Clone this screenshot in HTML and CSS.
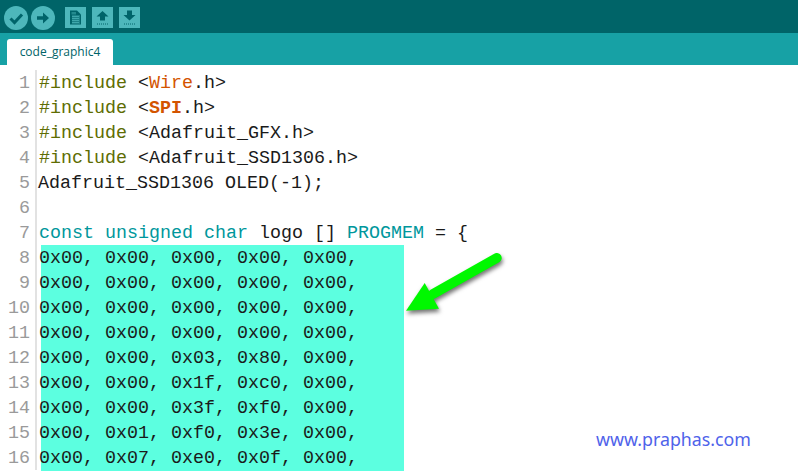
FILE: index.html
```html
<!DOCTYPE html>
<html lang="en">
<head>
<meta charset="utf-8">
<title>code_graphic4</title>
<link rel="stylesheet" href="styles.css">
</head>
<body>
<div class="app">
  <header class="toolbar">
    <button class="tool round" aria-label="Verify"><svg viewBox="0 0 24 24" width="24" height="24"><path d="M6.500 12.500l4 4 7.500-8" fill="none" stroke="#00646a" stroke-width="3"/></svg></button>
    <button class="tool round" aria-label="Upload"><svg viewBox="0 0 24 24" width="24" height="24"><path d="M6 10.200h6V6.500l6 5.500-6 5.500v-3.700H6z" fill="#00646a"/></svg></button>
    <button class="tool square first" aria-label="New"><svg viewBox="0 0 21 21" width="21" height="21"><path d="M5 3.500h7l4 4v10H5z" fill="#00646a"/><path d="M7 9.500h7M7 11.500h7M7 13.500h7M7 15.500h7M8 8v9M10 8v9M12 8v9M14 8v9" stroke="#4db7bb" stroke-width=".7" fill="none"/><path d="M6.500 5h4.500v2.500H6.500z" fill="#4db7bb" opacity=".45"/></svg></button>
    <button class="tool square" aria-label="Open"><svg viewBox="0 0 21 21" width="21" height="21"><path d="M10.500 4l6 5.500h-3.500v4h-5v-4H4.500z" fill="#00646a"/><path d="M5 17h11" stroke="#00646a" stroke-width="1" stroke-dasharray="1 1" fill="none"/></svg></button>
    <button class="tool square" aria-label="Save"><svg viewBox="0 0 21 21" width="21" height="21"><path d="M8 3.500h5v4.500h3.500l-6 5.500-6-5.500H8z" fill="#00646a"/><path d="M5 17h11" stroke="#00646a" stroke-width="1" stroke-dasharray="1 1" fill="none"/></svg></button>
  </header>
  <nav class="tabs"><div class="tab">code_graphic4</div></nav>
  <main class="editor">
    <div class="line"><span class="num">1</span><code class="code"><span class="pre">#include</span> &lt;<span class="lib">Wire</span>.h&gt;</code></div>
    <div class="line"><span class="num">2</span><code class="code"><span class="pre">#include</span> &lt;<span class="lib bold">SPI</span>.h&gt;</code></div>
    <div class="line"><span class="num">3</span><code class="code"><span class="pre">#include</span> &lt;Adafruit_GFX.h&gt;</code></div>
    <div class="line"><span class="num">4</span><code class="code"><span class="pre">#include</span> &lt;Adafruit_SSD1306.h&gt;</code></div>
    <div class="line"><span class="num">5</span><code class="code flush">Adafruit_SSD1306 OLED(-1);</code></div>
    <div class="line"><span class="num">6</span><code class="code"></code></div>
    <div class="line"><span class="num">7</span><code class="code"><span class="kw">const unsigned char</span> logo [] <span class="kw">PROGMEM</span> = {</code></div>
    <div class="line"><span class="num">8</span><code class="code hl">0x00, 0x00, 0x00, 0x00, 0x00,</code></div>
    <div class="line"><span class="num">9</span><code class="code hl">0x00, 0x00, 0x00, 0x00, 0x00,</code></div>
    <div class="line"><span class="num">10</span><code class="code hl">0x00, 0x00, 0x00, 0x00, 0x00,</code></div>
    <div class="line"><span class="num">11</span><code class="code hl">0x00, 0x00, 0x00, 0x00, 0x00,</code></div>
    <div class="line"><span class="num">12</span><code class="code hl">0x00, 0x00, 0x03, 0x80, 0x00,</code></div>
    <div class="line"><span class="num">13</span><code class="code hl">0x00, 0x00, 0x1f, 0xc0, 0x00,</code></div>
    <div class="line"><span class="num">14</span><code class="code hl">0x00, 0x00, 0x3f, 0xf0, 0x00,</code></div>
    <div class="line"><span class="num">15</span><code class="code hl">0x00, 0x01, 0xf0, 0x3e, 0x00,</code></div>
    <div class="line"><span class="num">16</span><code class="code hl">0x00, 0x07, 0xe0, 0x0f, 0x00,</code></div>
  </main>
  <svg class="arrow" viewBox="0 0 100 60" width="100" height="60" aria-hidden="true"><path d="M91.700 5L28 41" stroke="#00f800" stroke-width="10" stroke-linecap="round" fill="none"/><path d="M1 57.700L19.700 30 34 55.700z" fill="#00f800"/></svg>
  <div class="credit">www.praphas.com</div>
</div>
</body>
</html>
```
FILE: styles.css
```css
html, body { margin: 0; padding: 0; background: #fff; }
.app { position: relative; width: 798px; height: 475px; overflow: hidden; display: flex; flex-direction: column; }
.toolbar { height: 33px; box-sizing: border-box; background: #006468; display: flex; align-items: center; padding: 2px 0 0 4px; gap: 3px; flex: none; }
.tool { border: 0; padding: 0; margin: 0; background: #4db7bb; display: flex; align-items: center; justify-content: center; }
.round { width: 24px; height: 24px; border-radius: 50%; }
.square { width: 21px; height: 21px; margin-right: 3px; }
.first { margin-left: 7px; }
.tabs { height: 32px; background: #17a1a5; flex: none; display: flex; align-items: flex-end; padding-left: 7px; box-sizing: border-box; }
.tab { width: 106px; height: 26px; background: #fff; border-radius: 3px 3px 0 0; color: #006468; font: 12px/26px "Open Sans", sans-serif; text-align: center; }
.editor { padding-top: 5px; flex: 1; font: 18.33px/27px "Liberation Mono", monospace; color: #1a1a1a; }
.line { display: flex; height: 25px; }
.num { box-sizing: border-box; width: 37px; padding-right: 5px; margin-right: 2px; border-right: 2px solid #e2e2e2; flex: none; text-align: right; color: #9a9a9a; }
.code { font: inherit; white-space: pre; display: block; height: 25px; }
.flush { margin-left: -1px; }
.hl { background: #5cffe0; width: 363px; height: 26px; margin-left: 2px; text-indent: -2px; }
.pre { color: #5e6d03; }
.lib { color: #d35400; }
.bold { font-weight: bold; }
.kw { color: #00979c; }
.arrow { position: absolute; left: 405px; top: 253px; overflow: visible; filter: drop-shadow(1px 3px 2px rgba(0,0,0,.55)); }
.credit { position: absolute; left: 596px; top: 428px; color: #4f63ea; font: 17.800px/22px "Noto Sans", sans-serif; }
```
